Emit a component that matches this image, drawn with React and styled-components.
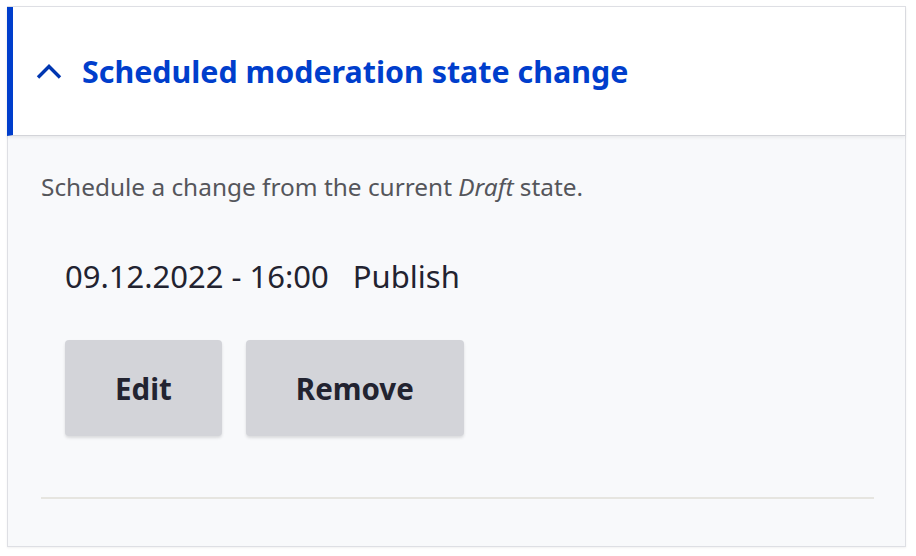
import React from "react";
import styled, { createGlobalStyle } from "styled-components";

const Global = createGlobalStyle`
  html, body {
    margin: 0;
    background: #ffffff;
  }
  body {
    font-family: "Noto Sans", "Open Sans", sans-serif;
    color: #222330;
  }
`;

const Page = styled.div`
  padding: 6px 10px 0 7px;
  height: 556px;
  box-sizing: border-box;
  overflow: hidden;
`;

const Details = styled.div`
  border: 1px solid #dedfe4;
  background: #f8f9fb;
  box-shadow: 0 1px 2px rgba(0, 0, 0, 0.06);
`;

const Summary = styled.div`
  display: flex;
  align-items: center;
  gap: 18px;
  height: 128px;
  margin-left: -1px;
  padding-left: 23px;
  background: #ffffff;
  border-left: 6px solid #003ecc;
  border-bottom: 1px solid #d3d4d9;
  box-shadow: 0 2px 3px rgba(0, 0, 0, 0.06);
  color: #003ecc;
  font-size: 30.4px;
  font-weight: 700;
`;

const Chevron = styled.svg`
  width: 28px;
  height: 18px;
  flex: none;
`;

const Body = styled.div`
  padding: 33px 31px 47px 33px;
`;

const Description = styled.p`
  margin: 0;
  font-size: 24.4px;
  line-height: 36px;
  color: #55565b;
`;

const Schedule = styled.div`
  margin: 50px 0 0 24px;
  display: flex;
  gap: 24px;
  font-size: 31px;
  line-height: 42px;
  color: #222330;
`;

const Actions = styled.div`
  display: flex;
  gap: 24px;
  margin: 43px 0 0 24px;
`;

const Button = styled.button`
  height: 96px;
  padding: 0 50px;
  border: 0;
  border-radius: 4px;
  background: #d3d4d9;
  box-shadow: 0 2px 3px rgba(0, 0, 0, 0.12);
  font-family: inherit;
  font-size: 29.5px;
  font-weight: 700;
  color: #222330;
`;

const Rule = styled.hr`
  margin: 61px 0 0;
  border: 0;
  border-top: 2px solid #e6e5e0;
`;

export default function App() {
  return (
    <Page>
      <Global />
      <Details>
        <Summary>
          <Chevron viewBox="0 0 28 18">
            <path
              d="M2 15.5 L13 4.5 L24 15.5"
              fill="none"
              stroke="#0036b1"
              strokeWidth="3.4"
            />
          </Chevron>
          Scheduled moderation state change
        </Summary>
        <Body>
          <Description>
            Schedule a change from the current <em>Draft</em> state.
          </Description>
          <Schedule>
            <span>09.12.2022 - 16:00</span>
            <span>Publish</span>
          </Schedule>
          <Actions>
            <Button>Edit</Button>
            <Button>Remove</Button>
          </Actions>
          <Rule />
        </Body>
      </Details>
    </Page>
  );
}
